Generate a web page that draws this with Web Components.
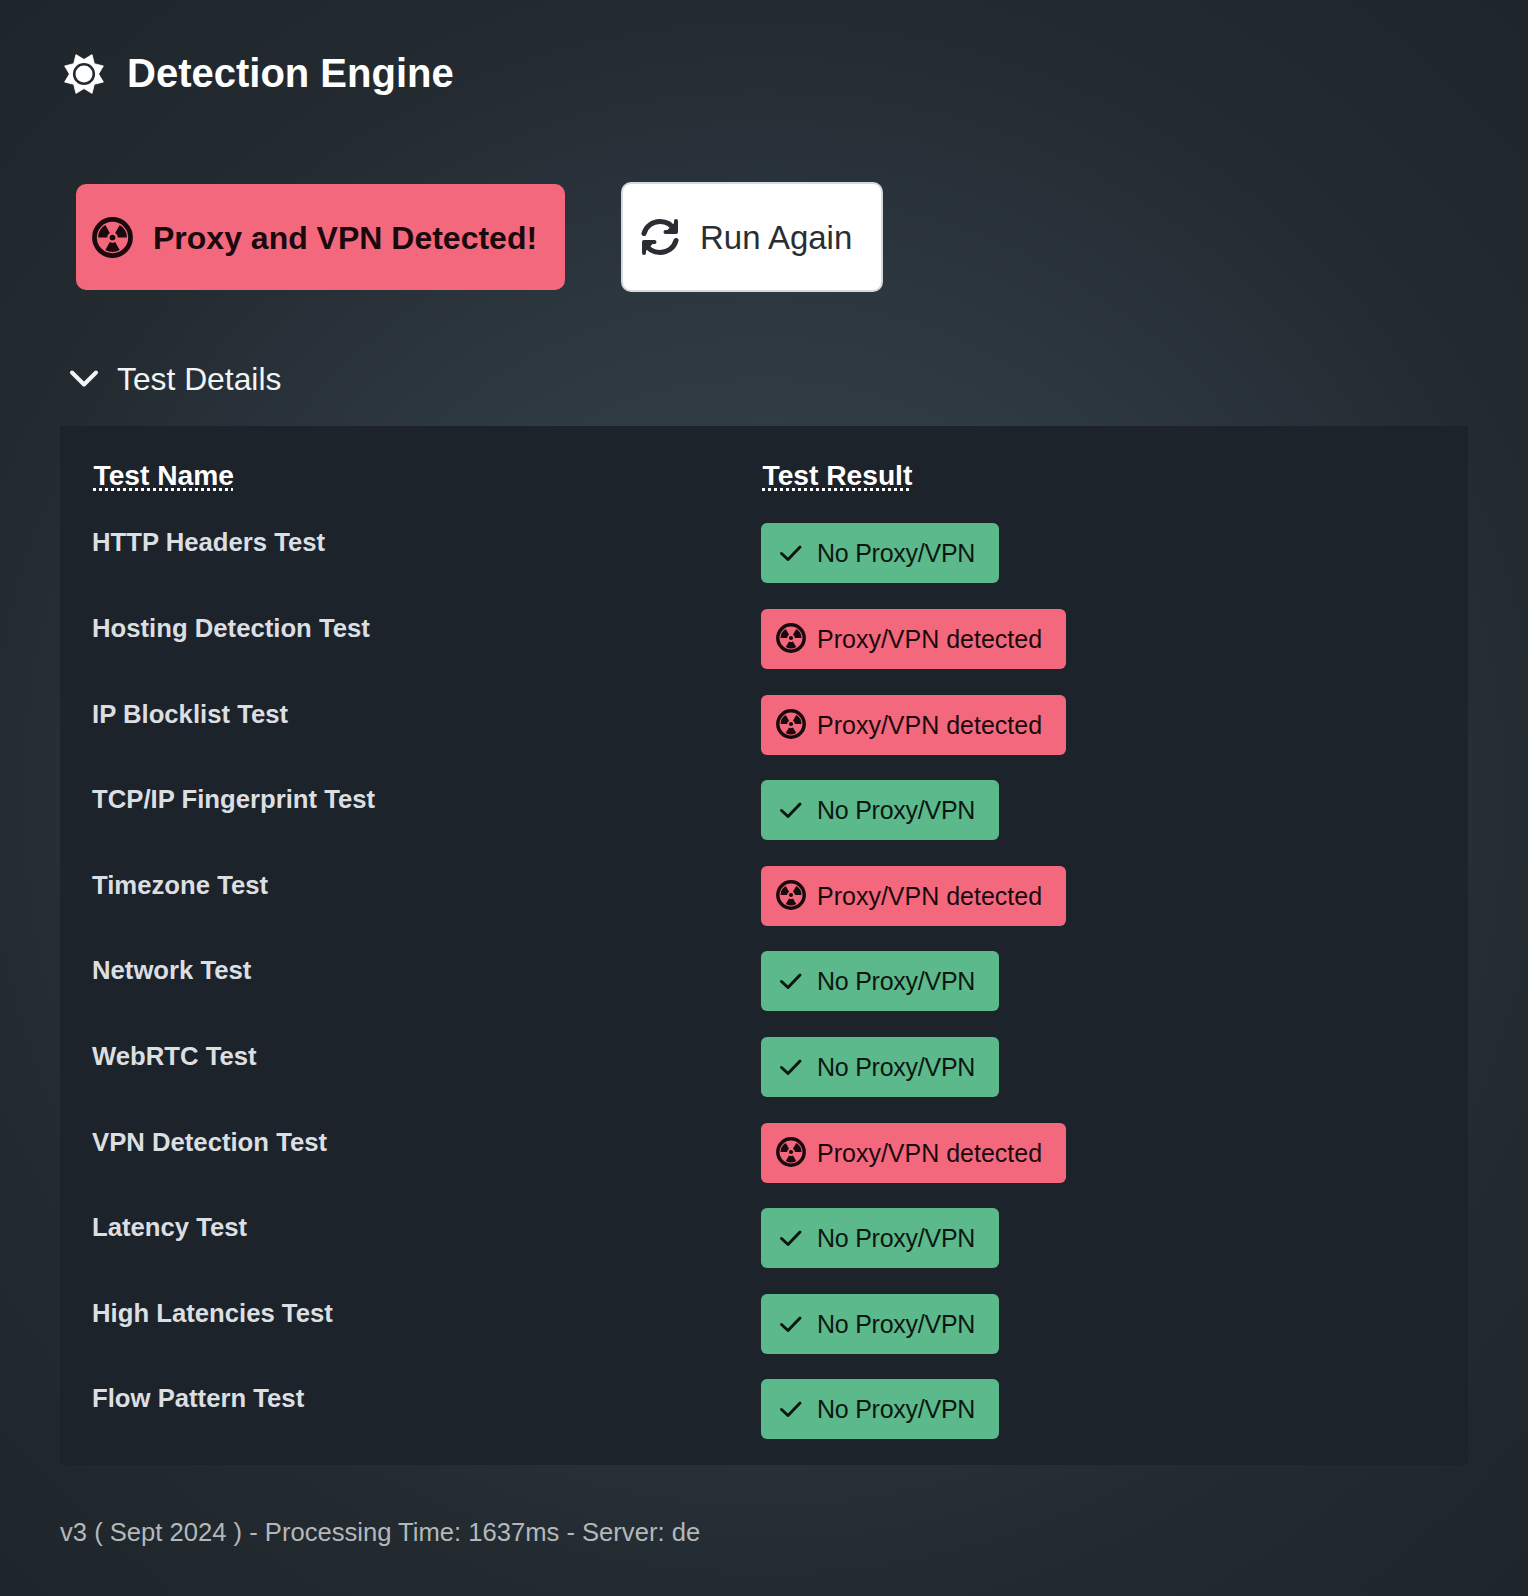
<!DOCTYPE html>
<html>
<head>
<meta charset="utf-8">
<title>Detection Engine</title>
<style>
  html, body { margin: 0; padding: 0; }
  body {
    height: 1596px;
    overflow: hidden;
    font-family: "Liberation Sans", Arial, sans-serif;
    background: #1e252b radial-gradient(circle 1100px at 50% 50%, #3d4852 0, #2d3740 500px, #232b31 800px, #1e252b 1100px);
  }
</style>
</head>
<body>
<detection-page>
  <page-title slot="title">Detection Engine</page-title>
  <status-banner slot="banner">Proxy and VPN Detected!</status-banner>
  <run-button slot="banner">Run Again</run-button>
  <test-details slot="details" label="Test Details">
    <test-row name="HTTP Headers Test" result="clean"></test-row>
    <test-row name="Hosting Detection Test" result="detected"></test-row>
    <test-row name="IP Blocklist Test" result="detected"></test-row>
    <test-row name="TCP/IP Fingerprint Test" result="clean"></test-row>
    <test-row name="Timezone Test" result="detected"></test-row>
    <test-row name="Network Test" result="clean"></test-row>
    <test-row name="WebRTC Test" result="clean"></test-row>
    <test-row name="VPN Detection Test" result="detected"></test-row>
    <test-row name="Latency Test" result="clean"></test-row>
    <test-row name="High Latencies Test" result="clean"></test-row>
    <test-row name="Flow Pattern Test" result="clean"></test-row>
  </test-details>
  <span slot="footer">v3 ( Sept 2024 ) - Processing Time: 1637ms - Server: de</span>
</detection-page>

<script>
// blade of the radiation sign, angle in degrees from 12 o'clock
function bladePath(angle, r1, r2, spread) {
  const pt = (r, a) => {
    const rad = (a - 90) * Math.PI / 180;
    return `${(20 + r * Math.cos(rad)).toFixed(2)} ${(20 + r * Math.sin(rad)).toFixed(2)}`;
  };
  const a1 = angle - spread;
  const a2 = angle + spread;
  return `M${pt(r1, a1)} L${pt(r2, a1)} A${r2} ${r2} 0 0 1 ${pt(r2, a2)} L${pt(r1, a2)} A${r1} ${r1} 0 0 0 ${pt(r1, a1)}Z`;
}

function radiationIcon(size) {
  return `<svg width="${size}" height="${size}" viewBox="0 0 40 40" fill="currentColor">
    <circle cx="20" cy="20" r="17.6" fill="none" stroke="currentColor" stroke-width="4.6"/>
    <circle cx="20" cy="20" r="2.8"/>
    <path d="${bladePath(-60, 5.2, 14, 30)} ${bladePath(60, 5.2, 14, 30)} ${bladePath(180, 5.2, 14, 30)}"/>
  </svg>`;
}

function sunIcon(size) {
  const pts = [];
  for (let i = 0; i < 16; i++) {
    const r = i % 2 === 0 ? 21 : 14.6;
    const a = (22.5 + i * 22.5) * Math.PI / 180 - Math.PI / 2;
    pts.push(`${(21 + r * Math.cos(a)).toFixed(2)},${(21 + r * Math.sin(a)).toFixed(2)}`);
  }
  return `<svg width="${size}" height="${size}" viewBox="0 0 42 42">
    <polygon points="${pts.join(' ')}" fill="#fff" stroke="#fff" stroke-width="0.8" stroke-linejoin="round"/>
    <circle cx="21" cy="21" r="9.8" fill="#fff" stroke="#232b32" stroke-width="2.6"/>
  </svg>`;
}

class DetectionPage extends HTMLElement {
  constructor() {
    super();
    this.attachShadow({ mode: 'open' });
    this.shadowRoot.innerHTML = `
      <style>
        :host { display: block; padding: 0 60px; color: #fff; }
        .banner {
          display: flex;
          align-items: center;
          gap: 56px;
          margin: 0 0 0 16px;
          padding-top: 35px;
        }
        .details { display: block; margin-top: 63px; }
        .footer {
          margin-top: 52px;
          font-size: 25.6px;
          line-height: 30px;
          color: #b4b8ba;
        }
      </style>
      <slot name="title"></slot>
      <div class="banner"><slot name="banner"></slot></div>
      <div class="details"><slot name="details"></slot></div>
      <div class="footer"><slot name="footer"></slot></div>
    `;
  }
}

class PageTitle extends HTMLElement {
  constructor() {
    super();
    this.attachShadow({ mode: 'open' });
    this.shadowRoot.innerHTML = `
      <style>
        :host {
          display: flex;
          align-items: center;
          gap: 22px;
          height: 147px;
          padding-left: 3px;
          font-size: 40px;
          font-weight: 700;
          color: #fff;
        }
        svg { flex: none; }
      </style>
      ${sunIcon(42)}
      <span><slot></slot></span>
    `;
  }
}

class StatusBanner extends HTMLElement {
  constructor() {
    super();
    this.attachShadow({ mode: 'open' });
    this.shadowRoot.innerHTML = `
      <style>
        :host {
          display: flex;
          align-items: center;
          gap: 20px;
          box-sizing: border-box;
          width: 489px;
          height: 106px;
          padding-left: 16px;
          border-radius: 10px;
          background: #f4687d;
          color: #1a0a0e;
          font-size: 32px;
          font-weight: 700;
          white-space: nowrap;
        }
        svg { flex: none; }
        span { margin-top: 2px; }
      </style>
      ${radiationIcon(41)}
      <span><slot></slot></span>
    `;
  }
}

class RunButton extends HTMLElement {
  constructor() {
    super();
    this.attachShadow({ mode: 'open' });
    this.shadowRoot.innerHTML = `
      <style>
        :host {
          display: flex;
          align-items: center;
          gap: 20px;
          box-sizing: border-box;
          width: 262px;
          height: 110px;
          padding-left: 17px;
          border: 2px solid #d3d9de;
          border-radius: 10px;
          background: #fff;
          color: #2a2e33;
          font-size: 33px;
          white-space: nowrap;
        }
        svg { flex: none; }
        span { margin-top: 2px; }
      </style>
      <svg width="40" height="40" viewBox="0 0 40 40" fill="none" stroke="currentColor" stroke-width="5" stroke-linecap="round" stroke-linejoin="round">
        <path d="M4 16.5 C6 9 12.5 4.5 20 4.5 C26.5 4.5 32 8 34.5 13.5"/>
        <path d="M36 4 V15 H25.500" fill="currentColor" stroke-width="4"/>
        <path d="M36 23.500 C34 31 27.500 35.500 20 35.500 C13.500 35.500 8 32 5.500 26.500"/>
        <path d="M4 36 V25 H14.500" fill="currentColor" stroke-width="4"/>
      </svg>
      <span><slot></slot></span>
    `;
  }
}

class TestDetails extends HTMLElement {
  constructor() {
    super();
    this.attachShadow({ mode: 'open' });
    this.shadowRoot.innerHTML = `
      <style>
        :host { display: block; }
        .summary {
          display: flex;
          align-items: center;
          gap: 18px;
          height: 48px;
          padding-left: 9px;
          font-size: 31.800px;
          color: #f2f4f5;
        }
        .panel {
          box-sizing: border-box;
          height: 1039px;
          margin-top: 23px;
          padding: 33px 32px 0;
          background: #1d232a;
        }
        .head {
          display: grid;
          grid-template-columns: 669px 1fr;
          height: 35px;
          margin-bottom: 29.4px;
          padding-left: 1.5px;
          font-size: 28.200px;
          font-weight: 700;
          color: #fff;
        }
        .head span span {
          text-decoration: underline dotted #fff 3px;
          text-underline-offset: 3px;
        }
      </style>
      <div class="summary">
        <svg width="30" height="20" viewBox="0 0 30 20" fill="none" stroke="currentColor" stroke-width="4" stroke-linecap="round" stroke-linejoin="round"><path d="M3 3.500 L15 15.500 L27 3.500"/></svg>
        <span>${this.getAttribute('label')}</span>
      </div>
      <div class="panel">
        <div class="head"><span><span>Test Name</span></span><span><span>Test Result</span></span></div>
        <slot></slot>
      </div>
    `;
  }
}

class TestRow extends HTMLElement {
  constructor() {
    super();
    this.attachShadow({ mode: 'open' });
    const detected = this.getAttribute('result') === 'detected';
    const icon = detected
      ? radiationIcon(30)
      : `<svg width="30" height="30" viewBox="0 0 30 30" fill="none" stroke="currentColor" stroke-width="3" stroke-linecap="round" stroke-linejoin="round"><path d="M5.500 15.500 L12 21.500 L24 9"/></svg>`;
    this.shadowRoot.innerHTML = `
      <style>
        :host {
          display: grid;
          grid-template-columns: 669px 1fr;
          height: 85.6px;
        }
        .name {
          padding-top: 4px;
          font-size: 25.700px;
          line-height: 30px;
          font-weight: 700;
          color: #dcdfe2;
        }
        .tag {
          display: inline-flex;
          align-items: center;
          gap: 11px;
          box-sizing: border-box;
          height: 60px;
          padding: 0 24px 0 15px;
          border-radius: 6px;
          font-size: 25px;
          letter-spacing: -0.25px;
          color: #0d1712;
          background: #5cb98b;
          white-space: nowrap;
        }
        .tag span { margin-top: 1px; }
        .tag.detected { background: #f4687d; color: #1a0a0e; letter-spacing: 0; }
        .tag.detected svg { margin-top: -1px; }
        svg { flex: none; }
      </style>
      <div class="name">${this.getAttribute('name')}</div>
      <div><span class="tag ${detected ? 'detected' : ''}">${icon}<span>${detected ? 'Proxy/VPN detected' : 'No Proxy/VPN'}</span></span></div>
    `;
  }
}

customElements.define('detection-page', DetectionPage);
customElements.define('page-title', PageTitle);
customElements.define('status-banner', StatusBanner);
customElements.define('run-button', RunButton);
customElements.define('test-details', TestDetails);
customElements.define('test-row', TestRow);
</script>
</body>
</html>
